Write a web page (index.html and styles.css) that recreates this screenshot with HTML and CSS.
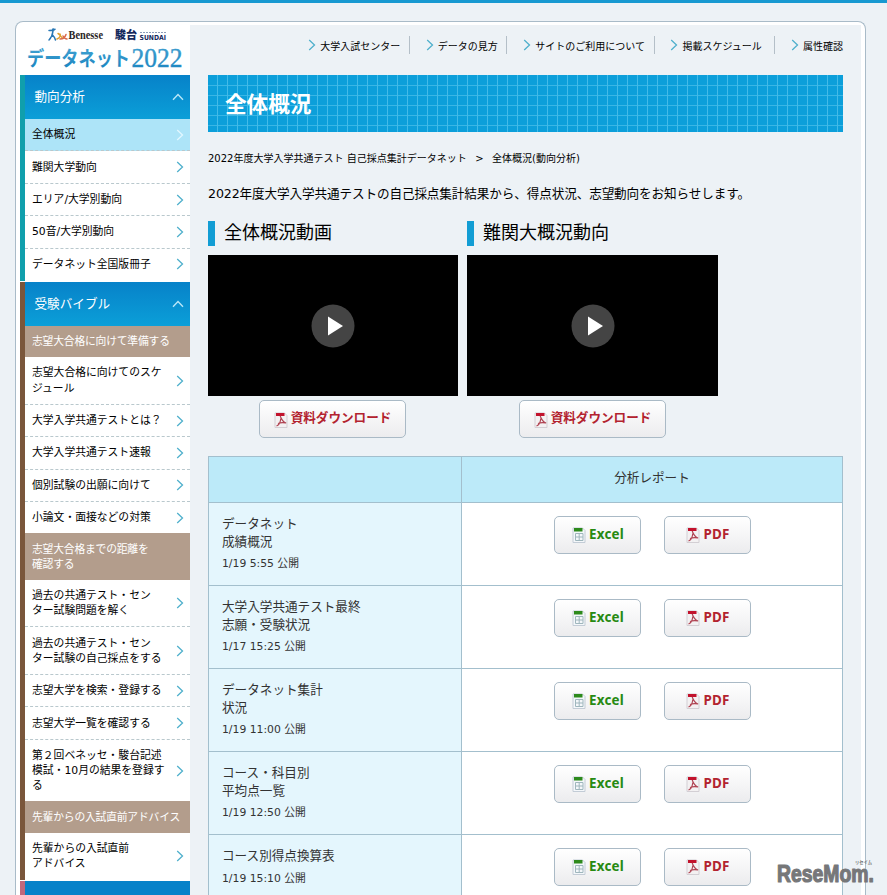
FILE: index.html
```html
<!DOCTYPE html>
<html lang="ja">
<head>
<meta charset="utf-8">
<title>全体概況</title>
<link rel="stylesheet" href="styles.css">
</head>
<body>
<svg width="0" height="0" class="defs" aria-hidden="true">
  <symbol id="next" viewBox="0 0 8 12"><path d="M1.2 1 6.5 6 1.2 11" fill="none" stroke="currentColor" stroke-width="1.3"/></symbol>
  <symbol id="up" viewBox="0 0 12 8"><path d="M1 6.8 6 1.5l5 5.3" fill="none" stroke="currentColor" stroke-width="1.4"/></symbol>
  <symbol id="pdf" viewBox="0 0 14 16"><path d="M1 1h9.500l2.500 2.500V15.500H1z" fill="#f3f1f2" stroke="#d3cfd4" stroke-width="1"/><path d="M2 1h8.500v3H2z" fill="#c2122c"/><path d="M6.200 4c1.500 4 3 6.500 6 7M6.800 6.500C6.500 10 5 13 2.500 14M4 11.500c2.500-1 5-1 8-.5" fill="none" stroke="#b04453" stroke-width="1.200"/></symbol>
  <symbol id="xls" viewBox="0 0 14 16"><path d="M1 1h9.500l2.500 2.500V15.500H1z" fill="#f4f7fa" stroke="#c3ccd6" stroke-width="1"/><path d="M2 1h8.500v3.500H2z" fill="#2d8a1c"/><path d="M3.500 6.500h7.500v7H3.500zM7.200 6.500v7M3.500 10H11" fill="none" stroke="#9fb6bd" stroke-width="1"/></symbol>
</svg>
<div class="frame">
  <aside class="side">
    <div class="logo">
      <svg width="170" height="50" viewBox="0 0 170 50">
        <defs><linearGradient id="lg" x1="0" y1="0" x2="0" y2="1"><stop offset="0" stop-color="#4aa9d6"/><stop offset="1" stop-color="#1580bd"/></linearGradient></defs>
        <g fill="none" stroke-linecap="round" stroke-width="1.500">
          <path d="M29 5.500c3 0 5-.5 6-1.200M33 6c-.5 4-2 7-4 9M32.500 10c1.500 1.500 2.500 3 3 5" stroke="#2a78b5"/>
          <circle cx="33.300" cy="4.500" r=".6" stroke="#2a78b5"/>
          <path d="M38 8.500c2 1 3 3.500 5 5M37 14c3-1 4-4 3-5" stroke="#e0a02e"/>
          <path d="M46 9.500c-1 3-3 4.500-6 4.500M43 11c1 2 2 3 4 3" stroke="#d9694a"/>
        </g>
        <text x="48.500" y="14" class="benesse" textLength="34.500" lengthAdjust="spacingAndGlyphs">Benesse</text>
        <text x="95" y="14" class="sundai" textLength="22" lengthAdjust="spacingAndGlyphs">駿台</text>
        <path d="M120 7.500h26" stroke="#8c9cb8" stroke-width="1" stroke-dasharray="2 1"/>
        <text x="119.500" y="14.500" class="sundai-en" textLength="26.500" lengthAdjust="spacingAndGlyphs">SUNDAI</text>
        <text x="7" y="40.500" class="name" textLength="103" lengthAdjust="spacingAndGlyphs">データネット</text>
        <text x="111.500" y="41.500" class="year" textLength="51" lengthAdjust="spacingAndGlyphs">2022</text>
      </svg>
    </div>
    <nav class="group teal">
      <h2>動向分析<svg class="up"><use href="#up"/></svg></h2>
      <a class="on"><span>全体概況</span><svg class="next"><use href="#next"/></svg></a>
      <a><span>難関大学動向</span><svg class="next"><use href="#next"/></svg></a>
      <a><span>エリア/大学別動向</span><svg class="next"><use href="#next"/></svg></a>
      <a><span>50音/大学別動向</span><svg class="next"><use href="#next"/></svg></a>
      <a class="last"><span>データネット全国版冊子</span><svg class="next"><use href="#next"/></svg></a>
    </nav>
    <nav class="group brown">
      <h2>受験バイブル<svg class="up"><use href="#up"/></svg></h2>
      <h3>志望大合格に向けて準備する</h3>
      <a><span>志望大合格に向けてのスケ<br>ジュール</span><svg class="next"><use href="#next"/></svg></a>
      <a><span>大学入学共通テストとは？</span><svg class="next"><use href="#next"/></svg></a>
      <a><span>大学入学共通テスト速報</span><svg class="next"><use href="#next"/></svg></a>
      <a><span>個別試験の出願に向けて</span><svg class="next"><use href="#next"/></svg></a>
      <a class="last"><span>小論文・面接などの対策</span><svg class="next"><use href="#next"/></svg></a>
      <h3>志望大合格までの距離を<br>確認する</h3>
      <a><span>過去の共通テスト・セン<br>ター試験問題を解く</span><svg class="next"><use href="#next"/></svg></a>
      <a><span>過去の共通テスト・セン<br>ター試験の自己採点をする</span><svg class="next"><use href="#next"/></svg></a>
      <a><span>志望大学を検索・登録する</span><svg class="next"><use href="#next"/></svg></a>
      <a><span>志望大学一覧を確認する</span><svg class="next"><use href="#next"/></svg></a>
      <a class="last"><span>第２回ベネッセ・駿台記述<br>模試・10月の結果を登録す<br>る</span><svg class="next"><use href="#next"/></svg></a>
      <h3>先輩からの入試直前アドバイス</h3>
      <a class="last"><span>先輩からの入試直前<br>アドバイス</span><svg class="next"><use href="#next"/></svg></a>
    </nav>
    <div class="group rose"></div>
  </aside>
  <main>
    <ul class="links">
      <li><svg class="next"><use href="#next"/></svg>大学入試センター</li>
      <li><svg class="next"><use href="#next"/></svg>データの見方</li>
      <li><svg class="next"><use href="#next"/></svg>サイトのご利用について</li>
      <li><svg class="next"><use href="#next"/></svg>掲載スケジュール</li>
      <li><svg class="next"><use href="#next"/></svg>属性確認</li>
    </ul>
    <h1>全体概況</h1>
    <p class="crumb"><span>2022年度大学入学共通テスト 自己採点集計データネット</span><span>&gt;</span><span>全体概況(動向分析)</span></p>
    <p class="lead">2022年度大学入学共通テストの自己採点集計結果から、得点状況、志望動向をお知らせします。</p>
    <div class="videos">
      <section>
        <h2>全体概況動画</h2>
        <div class="video"><svg width="44" height="44" viewBox="0 0 44 44"><circle cx="22" cy="22" r="21.500" fill="#444"/><path d="M17 12.500 32 22 17 31.500z" fill="#fff"/></svg></div>
        <a class="btn pdf wide"><svg><use href="#pdf"/></svg>資料ダウンロード</a>
      </section>
      <section>
        <h2>難関大概況動向</h2>
        <div class="video"><svg width="44" height="44" viewBox="0 0 44 44"><circle cx="22" cy="22" r="21.500" fill="#444"/><path d="M17 12.500 32 22 17 31.500z" fill="#fff"/></svg></div>
        <a class="btn pdf wide"><svg><use href="#pdf"/></svg>資料ダウンロード</a>
      </section>
    </div>
    <table>
      <thead><tr><th></th><th>分析レポート</th></tr></thead>
      <tbody>
        <tr><th>データネット<br>成績概況<small>1/19 5:55 公開</small></th><td><div class="files"><a class="btn xls"><svg><use href="#xls"/></svg>Excel</a><a class="btn pdf"><svg><use href="#pdf"/></svg>PDF</a></div></td></tr>
        <tr><th>大学入学共通テスト最終<br>志願・受験状況<small>1/17 15:25 公開</small></th><td><div class="files"><a class="btn xls"><svg><use href="#xls"/></svg>Excel</a><a class="btn pdf"><svg><use href="#pdf"/></svg>PDF</a></div></td></tr>
        <tr><th>データネット集計<br>状況<small>1/19 11:00 公開</small></th><td><div class="files"><a class="btn xls"><svg><use href="#xls"/></svg>Excel</a><a class="btn pdf"><svg><use href="#pdf"/></svg>PDF</a></div></td></tr>
        <tr><th>コース・科目別<br>平均点一覧<small>1/19 12:50 公開</small></th><td><div class="files"><a class="btn xls"><svg><use href="#xls"/></svg>Excel</a><a class="btn pdf"><svg><use href="#pdf"/></svg>PDF</a></div></td></tr>
        <tr><th>コース別得点換算表<small>1/19 15:10 公開</small></th><td><div class="files"><a class="btn xls"><svg><use href="#xls"/></svg>Excel</a><a class="btn pdf"><svg><use href="#pdf"/></svg>PDF</a></div></td></tr>
      </tbody>
    </table>
  </main>
</div>
<svg class="mark" width="104" height="32" viewBox="0 0 104 32">
  <text x="3" y="24.500" class="mark-name" textLength="97" lengthAdjust="spacingAndGlyphs">ReseMom.</text>
  <text x="81" y="7" class="mark-ruby" textLength="17" lengthAdjust="spacingAndGlyphs">リセイム</text>
</svg>
</body>
</html>
```
FILE: styles.css
```css
* { box-sizing: border-box; }
html, body { height: 895px; overflow: hidden; }
body {
  margin: 0;
  padding: 18px 21px 0 15px;
  border-top: 3px solid #1799d1;
  background: #edf2f6;
  color: #000;
  font-family: "DejaVu Sans", "Noto Sans CJK JP", sans-serif;
  font-size: 12.6px;
}
h1, h2, h3, p, ul { margin: 0; padding: 0; font-weight: normal; }
.defs { position: absolute; }

.frame {
  display: flex;
  height: 874px;
  padding: 3px 4px 0;
  border: 1px solid #a9bbc8;
  border-bottom: 0;
  border-radius: 8px 8px 0 0;
  background: #fff;
  overflow: hidden;
}

.side { width: 170px; flex: none; }
.logo { height: 50px; }
.logo svg { display: block; }
.benesse { font: bold 11.5px "Liberation Serif", serif; fill: #2b2626; }
.sundai { font: 900 11.5px "Noto Sans CJK JP", sans-serif; fill: #14285c; }
.sundai-en { font: bold 7px "DejaVu Sans", sans-serif; fill: #14285c; }
.name { font: bold 20px "Noto Sans CJK JP", sans-serif; fill: url(#lg); }
.year { font: 27.5px "Liberation Serif", serif; fill: url(#lg); stroke: #2b90c8; stroke-width: .4px; }

.group { border-left: 5px solid; margin-bottom: 1px; }
.teal { border-color: #109fac; height: 206px; }
.brown { border-color: #7a563b; height: 598px; }
.rose { border-color: #c0687c; height: 14px; background: #0782c9; }
.group h2 {
  display: flex;
  align-items: center;
  justify-content: space-between;
  height: 44px;
  padding: 0 6px 3.5px 9.5px;
  background: linear-gradient(#0782c9, #0b9fd8);
  color: #fff;
  font-size: 12.6px;
}
.up { width: 12px; height: 8px; margin-top: 3px; color: #b9e6f8; }
.next { width: 8px; height: 12px; flex: none; color: #4fb0cc; }
.group a {
  display: flex;
  align-items: center;
  justify-content: space-between;
  padding: 8.15px 6px 8.15px 7px;
  border-bottom: 1px dashed #b9c8cd;
  font-size: 10.8px;
  line-height: 15.12px;
  white-space: nowrap;
}
.group a.last { border-bottom: 0; }
.group a.on { background: #ade4f8; }
.on .next { color: #e2f7ff; }
.group h3 {
  padding: 8.1px 0 8.1px 7px;
  background: #b39d8c;
  color: #fff;
  font-size: 10.8px;
  line-height: 15.12px;
  letter-spacing: -.2px;
  white-space: nowrap;
}

main { flex: 1; min-width: 0; padding: 0 18px; background: #edf2f6; }
.links {
  display: flex;
  justify-content: flex-end;
  height: 50px;
  padding-top: 11px;
  list-style: none;
  font-size: 10px;
}
.links li {
  display: flex;
  align-items: center;
  gap: 4px;
  height: 18px;
  padding: 0 8.7px 0 15.8px;
  border-right: 1px solid #b4bfc8;
  white-space: nowrap;
}
.links li:nth-child(4) { padding-right: 12.5px; }
.links li:last-child { padding-right: 0; border: 0; }

h1 {
  height: 57px;
  padding: 1px 0 0 17px;
  background:
    repeating-linear-gradient(90deg, transparent 0 9px, #43bbe8 9px 10px) 0 0,
    repeating-linear-gradient(transparent 0 9px, #3ab6e5 9px 10px) 0 1px,
    #0c9fda;
  color: #fff;
  font-size: 21.6px;
  font-weight: bold;
  line-height: 57px;
}
.crumb {
  display: flex;
  gap: 8.5px;
  padding-top: 19px;
  font-size: 10px;
  line-height: 16px;
  white-space: nowrap;
}
.lead { margin-top: 17px; line-height: 20px; letter-spacing: -.11px; white-space: nowrap; }

.videos { display: flex; gap: 9px; margin-top: 17px; }
.videos section { width: 250px; }
.videos section + section { width: 251px; }
.videos h2 {
  height: 25px;
  border-left: 7px solid #129dd4;
  padding-left: 9px;
  font-size: 18px;
  line-height: 24px;
}
.video {
  display: flex;
  align-items: center;
  justify-content: center;
  height: 141px;
  margin-top: 9px;
  background: #000;
}
.btn {
  display: flex;
  align-items: center;
  justify-content: center;
  gap: 3px;
  width: 87px;
  height: 38px;
  padding-bottom: 3px;
  border: 1px solid #aabac6;
  border-radius: 5px;
  background: linear-gradient(#fff, #ececee);
  font-family: "Noto Sans", "Noto Sans CJK JP", sans-serif;
  font-size: 13.4px;
  font-weight: bold;
  line-height: 18px;
  letter-spacing: .2px;
}
.btn svg { width: 14px; height: 16px; margin-top: 3px; }
.btn.pdf { color: #b3232f; }
.btn.xls { color: #278a12; }
.files .btn { padding-left: 2px; }
.btn.wide { width: 147px; margin: 4px auto 0 51px; padding-bottom: 2px; font-size: 12.6px; letter-spacing: 0; }
section + section .btn.wide { margin-left: 52px; }

table {
  width: 635px;
  margin-top: 18px;
  border-collapse: collapse;
  table-layout: fixed;
  color: #333;
}
th, td { border: 1px solid #a3bfcd; padding: 0; font-weight: normal; }
thead th { height: 46px; background: #bceaf9; line-height: 20px; padding-bottom: 3px; }
thead th:first-child { width: 253px; }
tbody tr { height: 83px; }
tbody th {
  padding: 12px 0 0 13px;
  background: #e4f6fd;
  line-height: 17.64px;
  text-align: left;
  vertical-align: top;
}
small { display: block; margin-top: 6px; font-size: 10.8px; line-height: 15px; }
td { background: #fff; vertical-align: top; }
.files { display: flex; justify-content: center; gap: 23px; padding-top: 13px; }

.mark { position: absolute; left: 774px; top: 857px; }
.mark-name { font: bold 23.5px "Liberation Sans", sans-serif; fill: #767779; stroke: #767779; stroke-width: 1.2px; stroke-linejoin: round; }
.mark-ruby { font: bold 4.5px "Noto Sans CJK JP", sans-serif; fill: #767779; }
```
